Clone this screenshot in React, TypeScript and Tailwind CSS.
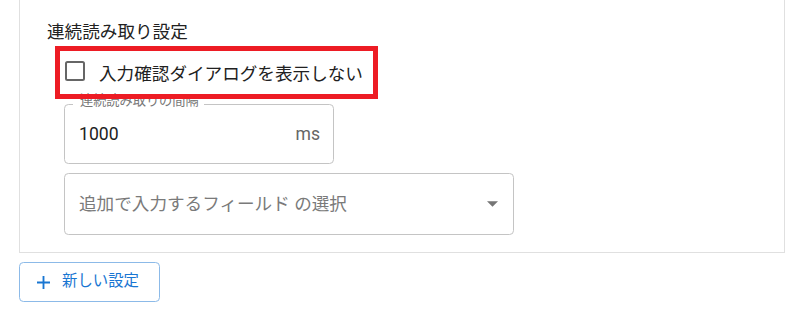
import React from "react";

export default function App() {
  return (
    <div className="w-[795px] h-[313px] bg-white overflow-hidden font-['Roboto','Noto_Sans_CJK_JP',sans-serif]">
      <div className="ml-[19px] w-[766px] border-x border-b border-[#e0e0e0] pt-[19px] pb-[17px]">
        <div className="ml-[27px] h-[26px] text-[17.6px] leading-[26px] text-[#212121]">
          連続読み取り設定
        </div>
        <div className="relative z-10 mt-[1px] ml-[35px] w-[323px] h-[53px] border-[5px] border-[#ed1c24] flex items-start pl-[5px]">
          <div className="mt-[10px] w-[20px] h-[20px] border-[2.2px] border-[#666666] rounded-[2.5px] shrink-0" />
          <div className="mt-[10px] ml-[14px] h-[26px] text-[17.6px] leading-[26px] text-[#212121] whitespace-nowrap">
            入力確認ダイアログを表示しない
          </div>
        </div>
        <div className="relative mt-[5px] ml-[44px] w-[270px] h-[60px] border border-[#c4c4c4] rounded-[4.4px] flex items-center pl-[14px] pr-[13px]">
          <div className="absolute left-[8px] top-[-11px] bg-white pl-[7px] pr-[5px] text-[13.2px] leading-[13.2px] text-[#777777] whitespace-nowrap">
            連続読み取りの間隔
          </div>
          <div className="flex-1 text-[17.6px] text-[#212121]">1000</div>
          <div className="text-[17.6px] text-[#666666]">ms</div>
        </div>
        <div className="mt-[9px] ml-[44px] w-[450px] h-[62px] border border-[#c4c4c4] rounded-[4.4px] flex items-center pl-[14px] pr-[15px]">
          <div className="flex-1 text-[17.6px] text-[#7a7a7a] whitespace-nowrap">
            追加で入力するフィールド の選択
          </div>
          <svg width="11" height="6" viewBox="0 0 10 5" className="shrink-0">
            <polygon points="0,0 10,0 5,5" fill="#757575" />
          </svg>
        </div>
      </div>
      <div className="mt-[9px] ml-[19px] w-[141px] h-[40px] border border-[#8cbae8] rounded-[4.4px] flex items-center pl-[17px] text-[#1976d2]">
        <svg width="13" height="13" viewBox="5 5 14 14" className="shrink-0">
          <path d="M19 13h-6v6h-2v-6H5v-2h6V5h2v6h6z" fill="#1976d2" />
        </svg>
        <span className="ml-[12px] text-[15.4px] leading-none whitespace-nowrap">新しい設定</span>
      </div>
    </div>
  );
}
